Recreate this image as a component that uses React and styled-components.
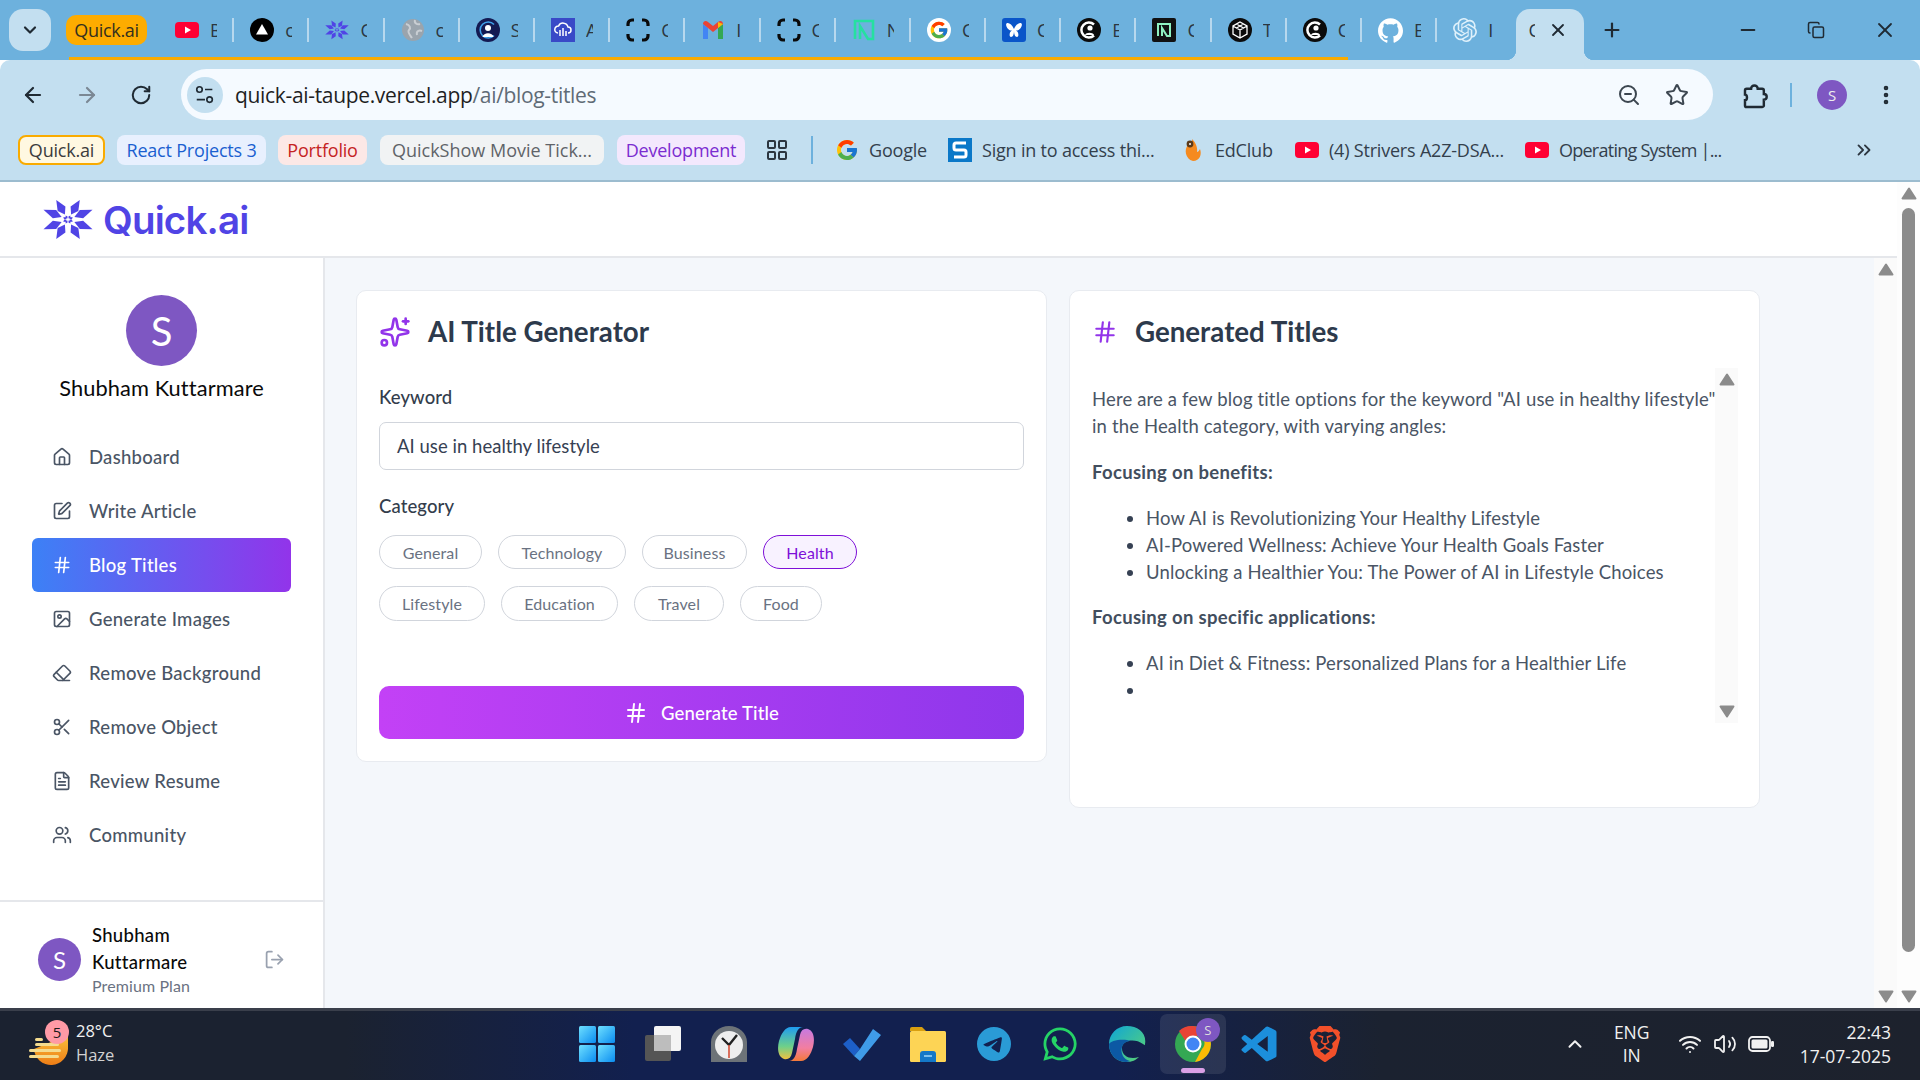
import React from "react";
import styled, { createGlobalStyle } from "styled-components";
import {
  House, SquarePen, Hash, Image, Eraser, Scissors, FileText, Users, LogOut, Sparkles,
  ArrowLeft, ArrowRight, RotateCw, ZoomOut, Star, EllipsisVertical, ChevronDown,
  X, Plus, Minus, LayoutGrid, ChevronsRight, ChevronUp, Wifi, Volume2, Copy,
} from "lucide-react";
import { FcGoogle } from "react-icons/fc";
import { SiGithub, SiOpenai, SiTelegram, SiBrave } from "react-icons/si";
import { FaWhatsapp } from "react-icons/fa";
import { BiLogoVisualStudio } from "react-icons/bi";

const UI = `"Lato", "Liberation Sans", sans-serif`;
const CHROME = `"Open Sans", "Noto Sans", sans-serif`;

const Global = createGlobalStyle`
  html, body { margin: 0; padding: 0; height: 100%; overflow: hidden; background: #fff; }
  #root { height: 100%; }
  * { box-sizing: border-box; }
`;

const Screen = styled.div`
  width: 1920px; height: 1080px; display: flex; flex-direction: column; overflow: hidden;
  font-family: ${UI};
`;

/* ---------- tab strip ---------- */
const TabStrip = styled.div`
  height: 60px; flex: none; background: #6db1dd; display: flex; align-items: flex-start;
  padding: 9px 0 0 9px; font-family: ${CHROME}; color: #1f2a33;
`;
const TabSearch = styled.div`
  width: 42px; height: 42px; flex: none; border-radius: 14px; background: #c3dff0;
  display: flex; align-items: center; justify-content: center; margin-right: 15px;
`;
const Group = styled.div`
  position: relative; display: flex; align-items: flex-start; height: 51px; flex: none;
  &::after {
    content: ""; position: absolute; left: 3px; right: 14px; bottom: 0; height: 3px; background: #f9ab00;
  }
`;
const GroupChip = styled.div`
  width: 81px; height: 30px; margin: 6px 12px 0 0; flex: none; border-radius: 10px; background: #fdac00;
  font-size: 18px; letter-spacing: -0.3px; display: flex; align-items: center; justify-content: center; color: #33301f;
`;
const Tab = styled.div`
  width: 75.2px; height: 42px; flex: none; display: flex; align-items: center; gap: 11px; padding-left: 16px; overflow: hidden;
  position: relative;
  &::after { content: ""; position: absolute; right: 0; top: 9px; height: 24px; width: 2px; background: ${(p) => (p.$last ? "transparent" : "#b7d8ee")}; }
`;
const TabLetter = styled.span`
  font-size: 18px; color: #2b3640; width: 7px; overflow: hidden; line-height: 1; flex: none; white-space: nowrap;
`;
const ActiveTab = styled.div`
  width: 68px; height: 51px; flex: none; margin-left: 4px; background: #c3dff0; border-radius: 14px 14px 0 0;
  display: flex; align-items: center; align-self: flex-start; padding: 0 0 9px 12px; gap: 13px; position: relative; z-index: 1;
  &::before, &::after {
    content: ""; position: absolute; bottom: 0; width: 10px; height: 10px;
  }
  &::before { left: -10px; background: radial-gradient(circle at 0 0, transparent 10px, #c3dff0 10.5px); }
  &::after { right: -10px; background: radial-gradient(circle at 100% 0, transparent 10px, #c3dff0 10.5px); }
`;
const NewTab = styled.div`
  width: 28px; height: 42px; margin-left: 14px; flex: none; display: flex; align-items: center; justify-content: center;
`;
const WindowControls = styled.div`
  margin-left: auto; display: flex; height: 42px; align-items: center; padding-right: 23px; gap: 48px;
`;

/* ---------- toolbar ---------- */
const ChromePanel = styled.div`
  flex: none; height: 122px; background: #c3dff0; font-family: ${CHROME}; border-bottom: 2px solid #9cbccf;
  border-radius: 10px 10px 0 0;
`;
const Toolbar = styled.div`
  height: 60px; display: flex; align-items: flex-end; padding: 0 20px 0 21px;
`;
const NavBtn = styled.div`
  width: 24px; height: 51px; display: flex; align-items: center; justify-content: center; margin-right: ${(p) => p.$mr || 30}px; flex: none;
`;
const Omnibox = styled.div`
  flex: none; width: 1532px; height: 51px; background: #f5faff; border-radius: 26px; display: flex; align-items: center;
  padding: 0 24px 0 6px; margin-left: 2px;
`;
const SiteInfo = styled.div`
  width: 36px; height: 36px; border-radius: 50%; background: #c3dff0; display: flex; align-items: center; justify-content: center; flex: none; margin-right: 12px;
`;
const Url = styled.div`
  font-size: 21px; color: #1f1f1f; letter-spacing: -0.33px; white-space: nowrap; flex: 1;
  span { color: #5f6b76; }
`;
const OmniIcons = styled.div`display: flex; gap: 24px; align-items: center;`;
const ToolRight = styled.div`
  display: flex; align-items: center; height: 51px; margin-left: 27px; flex: 1;
`;
const Separator = styled.div`
  width: 2px; height: ${(p) => p.$h || 24}px; background: #6db1dd; margin: ${(p) => p.$m || "0 15px"}; flex: none;
`;
const ProfileDot = styled.div`
  width: 30px; height: 30px; border-radius: 50%; background: #7e57c2; color: #eee; font-size: 15px; display: flex; align-items: center; justify-content: center; flex: none;
`;
const MenuDots = styled.span`display: inline-flex; margin-left: 27px; flex: none;`;

const BookmarkBar = styled.div`
  height: 60px; display: flex; align-items: center; padding: 0 0 0 18px;
  font-size: 18px; letter-spacing: -0.2px; white-space: nowrap;
`;
const BmChip = styled.div`
  height: 30px; width: ${(p) => p.$w}px; margin-right: ${(p) => p.$mr || 13}px; border-radius: 8px; flex: none; display: flex; align-items: center; justify-content: center;
  background: ${(p) => p.$bg}; color: ${(p) => p.$fg}; border: ${(p) => (p.$bd ? `2px solid ${p.$bd}` : "none")};
  letter-spacing: ${(p) => p.$ls ?? -0.2}px;
`;
const AppsGrid = styled.span`display: inline-flex; margin: 0 22px 0 7px; flex: none;`;
const Bookmark = styled.div`
  display: flex; align-items: center; gap: 10px; color: #33404c; flex: none; width: ${(p) => p.$w}px;
  letter-spacing: ${(p) => p.$ls ?? -0.2}px;
`;
const BmIcon = styled.span`display: inline-flex; flex: none;`;
const RoundFavicon = styled.span`
  width: 24px; height: 24px; border-radius: 50%; background: #fff; display: inline-flex; align-items: center; justify-content: center; flex: none;
`;

/* ---------- app ---------- */
const AppShell = styled.div`flex: 1; min-height: 0; display: flex;`;
const AppColumn = styled.div`flex: 1; min-width: 0; display: flex; flex-direction: column;`;
const Navbar = styled.div`
  height: 76px; flex: none; border-bottom: 2px solid #e5e7eb; background: #fff; display: flex; align-items: center; padding: 0 0 0 43px; gap: 10px;
`;
const LogoText = styled.div`
  font-family: "Inter", sans-serif; font-weight: 600; font-size: 38.5px; letter-spacing: -0.85px; color: #5044e5; padding-top: 2px;
`;
const Body = styled.div`flex: 1; min-height: 0; display: flex;`;
const Sidebar = styled.aside`
  width: 325px; flex: none; border-right: 2px solid #e5e7eb; background: #fff; display: flex; flex-direction: column;
`;
const SideTop = styled.div`flex: 1; padding: 37px 32px 0 32px; display: flex; flex-direction: column; align-items: center;`;
const BigAvatar = styled.div`
  width: ${(p) => p.$d}px; height: ${(p) => p.$d}px; border-radius: 50%; background: #7e57c2; color: #fff; flex: none;
  font-size: ${(p) => p.$f}px; display: flex; align-items: center; justify-content: center; font-family: "Lato", sans-serif;
`;
const SideName = styled.div`
  font-size: 21.8px; color: #0a0a0a; margin-top: 8px; line-height: 28px; letter-spacing: 0.1px; white-space: nowrap;
`;
const Menu = styled.nav`width: 100%; margin-top: 28px; display: flex; flex-direction: column;`;
const MenuItem = styled.div`
  height: 54px; border-radius: 6px; display: flex; align-items: center; padding-left: 20px; gap: 17px; font-size: 18.5px; font-weight: 500; letter-spacing: 0.28px;
  color: ${(p) => (p.$active ? "#fff" : "#4a5565")};
  background: ${(p) => (p.$active ? "linear-gradient(to right, #3c81f6, #9234ea)" : "transparent")};
`;
const SideFoot = styled.div`
  height: 108px; flex: none; border-top: 2px solid #e5e7eb; display: flex; align-items: center; padding: 8px 0 0 38px;
`;
const FootText = styled.div`margin-left: 11px; width: 124px; flex: none;`;
const FootName = styled.div`font-size: 18.5px; font-weight: 500; line-height: 27px; color: #0a0a0a; letter-spacing: 0.3px;`;
const FootPlan = styled.div`font-size: 16px; line-height: 20px; color: #6a7282; letter-spacing: 0.1px;`;
const FootAction = styled.div`margin-left: 48px; display: flex; color: #99a1af;`;

const Main = styled.main`
  flex: 1; min-width: 0; background: #f4f7fb; padding: 32px 0 0 31px; display: flex; align-items: flex-start; gap: 22px;
`;
const Card = styled.section`
  width: ${(p) => p.$w}px; height: ${(p) => p.$h}px; flex: none; background: #fff; border: 1.5px solid #e8ebf0; border-radius: 10px; padding: 22px;
  display: flex; flex-direction: column;
`;
const CardHead = styled.div`
  display: flex; align-items: center; gap: ${(p) => p.$gap}px; height: 38px;
`;
const CardTitle = styled.h2`
  margin: 0; font-size: 27.7px; font-weight: 700; color: #2d3a4c; line-height: 38px;
`;
const FieldLabel = styled.div`
  font-size: 18.5px; font-weight: 500; color: #333d4c; line-height: 24px; margin-top: ${(p) => p.$mt}px; letter-spacing: 0.1px;
`;
const Input = styled.div`
  height: 49px; margin-top: 13px; border: 1.5px solid #d1d5dc; border-radius: 7px; display: flex; align-items: center; padding-left: 17px; font-size: 18.5px; color: #364153; letter-spacing: 0.03px;
`;
const ChipWrap = styled.div`display: flex; flex-wrap: wrap; gap: 17px 16px; margin-top: 17px; height: 86px; max-width: 500px; align-content: flex-start;`;
const Chip = styled.div`
  height: ${(p) => p.$h}px; width: ${(p) => p.$w}px; border-radius: 18px; font-size: 16px; display: flex; align-items: center; justify-content: center; letter-spacing: 0.1px;
  border: 1.5px solid ${(p) => (p.$on ? "#7e10d8" : "#d1d5dc")};
  color: ${(p) => (p.$on ? "#7e10d8" : "#6a7282")};
  background: ${(p) => (p.$on ? "#f8f2ff" : "#fff")};
`;
const GenButton = styled.div`
  height: 54px; margin-top: 65px; border-radius: 10px; background: linear-gradient(to right, #c341f6, #8e37eb); color: #fff; font-size: 18.5px; font-weight: 500; letter-spacing: 0.15px;
  display: flex; align-items: center; justify-content: center; gap: 13px;
`;
const ResultRow = styled.div`display: flex; margin-top: 17px; height: 355px; margin-right: -1px;`;
const ResultBody = styled.div`
  flex: 1; min-width: 0; padding-top: 18px; font-size: 18.5px; line-height: 27px; color: #4a5565; letter-spacing: 0.14px;
  p { margin: 0 0 19px; white-space: nowrap; }
  strong { font-weight: 700; color: #424e5e; letter-spacing: 0.32px; }
  ul { margin: 0 0 18px; padding-left: 54px; }
  li { height: 27px; white-space: nowrap; }
  li::marker { color: #364153; }
`;
const Track = styled.div`
  width: 23px; flex: none; background: ${(p) => p.$bg || "#fafafa"}; display: flex; flex-direction: column; align-items: center; justify-content: space-between; padding: 5px 0;
`;
const Thumb = styled.div`width: 13px; flex: 1; border-radius: 7px; background: #8b8b8b; margin: 8px 0 38px;`;

/* ---------- taskbar ---------- */
const Taskbar = styled.footer`
  height: 72px; flex: none; border-top: 3px solid #3a3f4b; display: flex; align-items: center;
  background: linear-gradient(to right, #1b2230 0%, #1b2230 18%, #12204f 33%, #12204f 58%, #1b2230 72%, #1d222d 100%);
  color: #f1f1f1; font-family: "Open Sans", sans-serif;
`;
const Weather = styled.div`
  width: 488px; flex: none; display: flex; align-items: center; padding: 0 0 5px 28px; gap: 8px; height: 100%;
`;
const WeatherGlyph = styled.div`width: 40px; height: 48px; position: relative; flex: none;`;
const Badge = styled.div`
  position: absolute; top: 1px; left: 17px; width: 24px; height: 24px; border-radius: 50%; background: #ff9aa6; color: #1a1a1a; font-size: 15px; display: flex; align-items: center; justify-content: center;
`;
const WeatherText = styled.div`font-size: 16.5px; line-height: 24px; span { display: block; } span + span { color: #d2d2d2; }`;
const AppIcons = styled.div`display: flex; align-items: center; height: 100%; flex: none; margin-left: 76px; padding-bottom: 3px;`;
const AppSlot = styled.div`
  width: 66.2px; height: 60px; display: flex; align-items: center; justify-content: center; position: relative; border-radius: 7px;
  background: ${(p) => (p.$on ? "rgba(255,255,255,0.09)" : "transparent")};
`;
const Indicator = styled.div`
  position: absolute; bottom: 1px; left: 50%; transform: translateX(-50%); width: 24px; height: 5px; border-radius: 3px; background: #d9a0e6;
`;
const AppBadge = styled.div`
  position: absolute; top: 4px; right: 6px; width: 24px; height: 24px; border-radius: 50%; background: #7e57c2; color: #ddd; font-size: 13px; display: flex; align-items: center; justify-content: center;
`;
const Tray = styled.div`
  margin-left: auto; display: flex; align-items: center; padding: 0 29px 3px 0; font-size: 17.5px;
`;
const Lang = styled.div`text-align: center; line-height: 23px; width: 50px; margin: 0 21px 0 21px;`;
const TrayIcons = styled.div`display: flex; align-items: center; gap: 11px;`;
const Clock = styled.div`text-align: right; line-height: 24px; margin-left: 26px; white-space: nowrap;`;

/* ---------- drawings ---------- */
const arm = (tx, ty) => {
  const len = Math.hypot(tx, ty);
  const nx = -ty / len;
  const ny = tx / len;
  const w = 4.6;
  const mx = tx * 0.55, my = ty * 0.55;
  const ix = tx * 0.26, iy = ty * 0.26;
  return `M${tx} ${ty} L${mx + nx * w} ${my + ny * w} L${ix} ${iy} L${mx - nx * w} ${my - ny * w} Z`;
};
const peaks = [[12, -20], [25, -10], [25, 10], [12, 20], [-12, 20], [-25, 10], [-25, -10], [-12, -20]];
const Burst = ({ size = 50, color = "#5044e5" }) => (
  <svg width={size} height={size * 0.82} viewBox="-25.500 -20.500 51 41">
    <g fill={color}>
      {peaks.map(([x, y], i) => <path key={i} d={arm(x, y)} />)}
      {peaks.map(([x, y], i) => (
        <path key={`i${i}`} d={`M${x * 0.2} ${y * 0.2} L${x * 0.12 - y * 0.05} ${y * 0.12 + x * 0.05} L${x * 0.05} ${y * 0.05} L${x * 0.12 + y * 0.05} ${y * 0.12 - x * 0.05} Z`} />
      ))}
    </g>
  </svg>
);
const Svg = ({ s = 24, vb = "0 0 24 24", children }) => (
  <svg width={s} height={s} viewBox={vb} style={{ flex: "none" }}>{children}</svg>
);
const Yt = ({ s = 24 }) => (
  <Svg s={s}><rect x="0" y="4" width="24" height="16" rx="4" fill="#ff0033" /><path d="M10 8.500 L16 12 L10 15.500 Z" fill="#fff" /></Svg>
);
const Frame = () => (
  <Svg><path d="M8 2H6a4 4 0 0 0-4 4v2M16 2h2a4 4 0 0 1 4 4v2M8 22H6a4 4 0 0 1-4-4v-2M16 22h2a4 4 0 0 0 4-4v-2" fill="none" stroke="#0a0a0a" strokeWidth="3.2" /></Svg>
);
const BlackC = () => (
  <Svg><circle cx="12" cy="12" r="12" fill="#0b0b0b" /><path d="M17 6.500A7.500 7.500 0 1 0 17 17.500" fill="none" stroke="#fff" strokeWidth="2.500" /><circle cx="13" cy="10" r="2.600" fill="#fff" /><path d="M8 17c1-3 8-3 9 0z" fill="#fff" /></Svg>
);
const favicons = [
  <Yt />,
  <Svg><circle cx="12" cy="12" r="12" fill="#000" /><path d="M12 6 L18 16.500 H6 Z" fill="#fff" /></Svg>,
  <Burst size={24} />,
  <Svg><circle cx="12" cy="12" r="11" fill="#9aa4ad" /><path d="M5 6c4 1 5 4 3 6s1 5 3 8M14 2c-1 3 2 5 5 4M21 13c-3-1-6 0-5 4" fill="none" stroke="#c9ced3" strokeWidth="2" /></Svg>,
  <Svg><circle cx="12" cy="12" r="12" fill="#141a52" /><path d="M18 6.500A8 8 0 1 0 18 17.500" fill="none" stroke="#3fa0ea" strokeWidth="1.600" /><circle cx="12" cy="10" r="3" fill="#fff" /><path d="M6.500 19c1-5 10-5 11 0z" fill="#fff" /></Svg>,
  <Svg><rect width="24" height="24" fill="#3949c7" /><path d="M7 15a3.500 3.500 0 0 1 .6-7A5 5 0 0 1 17 9a3 3 0 0 1 0 6" fill="none" stroke="#fff" strokeWidth="1.500" /><path d="M9 12v6M12 10v8M15 13v5" stroke="#fff" strokeWidth="1.500" /></Svg>,
  <Frame />,
  <Svg>
    <path d="M2 21V6l5 4v11z" fill="#4285f4" /><path d="M22 21V6l-5 4v11z" fill="#34a853" />
    <path d="M2 6c0-3 3-4 5-2l5 4 5-4c2-2 5-1 5 2l-10 8z" fill="#ea4335" />
    <path d="M17 4l5 2-5 4z" fill="#fbbc05" />
  </Svg>,
  <Frame />,
  <Svg><path d="M3 21V3h18v18h-5L8 8v13" fill="none" stroke="#25e0a0" strokeWidth="2.600" /></Svg>,
  <RoundFavicon><FcGoogle size={20} /></RoundFavicon>,
  <Svg><rect width="24" height="24" rx="3" fill="#0a55c9" /><path d="M12 11C10 6 6 4 4.500 5.500S6 13 10 12.500C7 14 7 19 9 19s3-3 3-6c0 3 1 6 3 6s2-5-1-6.500C18 13 21 7 19.500 5.500S14 6 12 11z" fill="#fff" /></Svg>,
  <BlackC />,
  <Svg><rect width="24" height="24" rx="2" fill="#111" /><path d="M6 18V6h12v12h-3L10 10v8" fill="none" stroke="#8ef0c0" strokeWidth="2" /></Svg>,
  <Svg><circle cx="12" cy="12" r="12" fill="#0b0b0b" /><path d="M12 4l7 4v8l-7 4-7-4V8zM5 8l7 4 7-4M12 12v8M8.500 6l7 4M15.500 6l-7 4" fill="none" stroke="#fff" strokeWidth="1.300" /></Svg>,
  <BlackC />,
  <SiGithub size={25} color="#fff" />,
  <SiOpenai size={24} color="#dff1fb" />,
];
const tabLetters = "BcCcSACICNCCECTCEI".split("");

const Tune = () => (
  <Svg s={22}><circle cx="6" cy="6" r="3" fill="none" stroke="#1f2a33" strokeWidth="1.800" /><path d="M12 6h8M3 17h9" stroke="#1f2a33" strokeWidth="1.800" /><circle cx="17" cy="17" r="3" fill="none" stroke="#1f2a33" strokeWidth="1.800" /></Svg>
);
const Extension = () => (
  <Svg s={28}><path d="M6 7h4a3 3 0 0 1 6 0h4a1.500 1.500 0 0 1 1.500 1.500v3.200a2.600 2.600 0 0 1 0 5.200v4.600A1.500 1.500 0 0 1 20 23.500H6a1.500 1.500 0 0 1-1.500-1.500v-4.700c2.400 0 2.400-5 0-5V8.500A1.500 1.500 0 0 1 6 7z" transform="scale(0.95)" fill="none" stroke="#1f2a33" strokeWidth="2.200" /></Svg>
);
const Battery = () => (
  <svg width="26" height="16" viewBox="0 0 26 16">
    <rect x="1" y="1" width="21" height="14" rx="3.500" fill="none" stroke="#f1f1f1" strokeWidth="1.800" />
    <rect x="3.500" y="3.500" width="16" height="9" rx="1.500" fill="#f1f1f1" />
    <rect x="23" y="5" width="3" height="6" rx="1.200" fill="#f1f1f1" />
  </svg>
);
const SBox = () => (
  <Svg><rect width="24" height="24" fill="#0a78c8" /><path d="M18 5H8a2 2 0 0 0-2 2v3a2 2 0 0 0 2 2h8a2 2 0 0 1 2 2v3a2 2 0 0 1-2 2H6" fill="none" stroke="#fff" strokeWidth="3" /></Svg>
);
const Flame = () => (
  <Svg><path d="M11 1c1 4-3 3-4 6C3 11 4 21 12 23c7 0 9-7 7-12-1 2-2 3-3 3 1-5-2-10-5-13z" fill="#f58a1f" /><circle cx="9" cy="6" r="3.400" fill="#5b3a1a" /><circle cx="9" cy="6" r="1" fill="#fff" /></Svg>
);
const Triangle = ({ down, s = 18 }) => (
  <svg width={s} height={s * 0.72} viewBox="0 0 18 13" style={{ flex: "none" }}>
    <path d={down ? "M2.500 1.500 H15.500 L9 11.500 Z" : "M2.500 11.500 H15.500 L9 1.500 Z"} fill="#8b8b8b" stroke="#8b8b8b" strokeWidth="2" strokeLinejoin="round" />
  </svg>
);
const HazeGlyph = () => (
  <svg width="40" height="48" viewBox="0 0 40 48">
    <defs><linearGradient id="sun" x1="0" y1="0" x2="0" y2="1"><stop offset="0" stopColor="#f9c23c" /><stop offset="1" stopColor="#ee7d16" /></linearGradient></defs>
    <path d="M6 30 a17 17 0 0 0 34 -2 l0 -12 Z" fill="url(#sun)" />
    <g fill="#f4dc8f">
      <rect x="7" y="19" width="8" height="3" rx="1.500" /><rect x="7" y="24" width="24" height="3" rx="1.500" />
      <rect x="1" y="30" width="32" height="3" rx="1.500" /><rect x="1" y="36" width="30" height="3" rx="1.500" />
    </g>
  </svg>
);
const Win = () => (
  <svg width="36" height="36" viewBox="0 0 36 36">
    <defs><linearGradient id="wg" x1="0" y1="0" x2="1" y2="1"><stop offset="0" stopColor="#6fe0ff" /><stop offset="1" stopColor="#0a8cf0" /></linearGradient></defs>
    <rect x="0" y="0" width="17" height="17" rx="1.500" fill="url(#wg)" /><rect x="19" y="0" width="17" height="17" rx="1.500" fill="url(#wg)" />
    <rect x="0" y="19" width="17" height="17" rx="1.500" fill="url(#wg)" /><rect x="19" y="19" width="17" height="17" rx="1.500" fill="url(#wg)" />
  </svg>
);
const TaskView = () => (
  <svg width="36" height="36" viewBox="0 0 36 36">
    <rect x="0" y="9" width="26" height="26" rx="2" fill="#555" /><rect x="9" y="0" width="27" height="25" rx="2" fill="#f4f4f4" /><rect x="9" y="9" width="17" height="16" fill="#bdbdbd" />
  </svg>
);
const ClockApp = () => (
  <svg width="36" height="36" viewBox="0 0 36 36">
    <path d="M0 36V16a18 16 0 0 1 36 0v20z" fill="#6d7378" /><ellipse cx="18" cy="19" rx="14" ry="14" fill="#eee" />
    <path d="M18 19L11 12M18 19L26 9" stroke="#222" strokeWidth="2.400" /><path d="M18 19v13" stroke="#d23a1f" strokeWidth="1.400" />
  </svg>
);
const Copilot = () => (
  <svg width="36" height="36" viewBox="0 0 36 36">
    <defs>
      <linearGradient id="c1" x1="0" y1="0" x2="0" y2="1"><stop offset="0" stopColor="#1f9cf0" /><stop offset=".6" stopColor="#6dd08a" /><stop offset="1" stopColor="#f0c040" /></linearGradient>
      <linearGradient id="c2" x1="0" y1="0" x2="0" y2="1"><stop offset="0" stopColor="#c77ae0" /><stop offset=".6" stopColor="#f27ea0" /><stop offset="1" stopColor="#f47a3a" /></linearGradient>
    </defs>
    <path d="M13 1h12c-4 0-7 4-8 12l-3 14c-1 5-4 7-8 6-6-2-7-10-5-18C3 8 7 1 13 1z" fill="url(#c1)" />
    <path d="M23 35H11c4 0 7-4 8-12l3-14c1-5 4-7 8-6 6 2 7 10 5 18-2 7-6 14-12 14z" fill="url(#c2)" />
  </svg>
);
const Todo = () => (
  <svg width="38" height="36" viewBox="0 0 38 36">
    <path d="M0 18l7-6 10 11-6 7z" fill="#1d5fc8" /><path d="M11 30l6-7L30 3l8 6-21 26z" fill="#3f9be8" />
  </svg>
);
const Folder = () => (
  <svg width="36" height="36" viewBox="0 0 36 36">
    <path d="M0 3a2 2 0 0 1 2-2h10l4 4H0z" fill="#d99f10" /><rect x="0" y="5" width="36" height="31" rx="1.500" fill="#fdd455" />
    <path d="M10 36v-8a3 3 0 0 1 3-3h10a3 3 0 0 1 3 3v8z" fill="#1478c8" /><rect x="14" y="29" width="8" height="2" fill="#7cc0ee" />
  </svg>
);
const Edge = () => (
  <svg width="38" height="38" viewBox="0 0 38 38">
    <defs>
      <linearGradient id="e1" x1="0" y1="0" x2="1" y2="1"><stop offset="0" stopColor="#0ea5d8" /><stop offset="1" stopColor="#5ed66f" /></linearGradient>
    </defs>
    <path d="M19 1C9 1 1 9 1 19c0 11 8 18 17 18 6 0 10-2 13-5-8 3-18 0-17-10 1-7 13-9 21-3 2 1 2 2 2 0 2-11-7-18-18-18z" fill="url(#e1)" />
    <path d="M1 19c0 11 8 18 17 18 3 0 4-1 4-1-6-1-10-8-8-14 1-4 5-6 9-6-9-3-21 0-22 3z" fill="#0c59a4" />
  </svg>
);
const ChromeLogo = () => (
  <svg width="38" height="38" viewBox="0 0 38 38">
    <circle cx="19" cy="19" r="18" fill="#34a853" />
    <path d="M19 1a18 18 0 0 1 16 10H19a8 8 0 0 0-7.500 5L5 6a18 18 0 0 1 14-5z" fill="#ea4335" />
    <path d="M35 11a18 18 0 0 1-14 26l7-13a8 8 0 0 0-2-13z" fill="#fbbc05" />
    <circle cx="19" cy="19" r="8.500" fill="#fff" /><circle cx="19" cy="19" r="6.500" fill="#4285f4" />
  </svg>
);

const menu = [
  [House, "Dashboard"], [SquarePen, "Write Article"], [Hash, "Blog Titles"], [Image, "Generate Images"],
  [Eraser, "Remove Background"], [Scissors, "Remove Object"], [FileText, "Review Resume"], [Users, "Community"],
];
const chips = [
  ["General", 103, 34], ["Technology", 128, 34], ["Business", 105, 34], ["Health", 94, 34],
  ["Lifestyle", 106, 35], ["Education", 117, 35], ["Travel", 90, 35], ["Food", 82, 35],
];
const GROUPED = 16;

export default function App() {
  return (
    <Screen>
      <Global />
      <TabStrip>
        <TabSearch><ChevronDown size={20} color="#1f2a33" strokeWidth={2.6} /></TabSearch>
        <Group>
          <GroupChip>Quick.ai</GroupChip>
          {favicons.slice(0, GROUPED).map((f, i) => (
            <Tab key={i}>{f}<TabLetter>{tabLetters[i]}</TabLetter></Tab>
          ))}
        </Group>
        {favicons.slice(GROUPED).map((f, i) => (
          <Tab key={i} $last={i === 1}>{f}<TabLetter>{tabLetters[GROUPED + i]}</TabLetter></Tab>
        ))}
        <ActiveTab>
          <TabLetter>C</TabLetter>
          <X size={20} color="#1f2a33" strokeWidth={2.2} />
        </ActiveTab>
        <NewTab><Plus size={22} color="#1f2a33" strokeWidth={2.4} /></NewTab>
        <WindowControls>
          <Minus size={22} color="#1f2a33" strokeWidth={2} />
          <Copy size={18} color="#1f2a33" strokeWidth={2} />
          <X size={24} color="#1f2a33" strokeWidth={1.8} />
        </WindowControls>
      </TabStrip>

      <ChromePanel>
        <Toolbar>
          <NavBtn><ArrowLeft size={24} color="#1f2a33" strokeWidth={2.2} /></NavBtn>
          <NavBtn><ArrowRight size={24} color="#7b8894" strokeWidth={2.2} /></NavBtn>
          <NavBtn $mr={26}><RotateCw size={22} color="#1f2a33" strokeWidth={2.2} /></NavBtn>
          <Omnibox>
            <SiteInfo><Tune /></SiteInfo>
            <Url>quick-ai-taupe.vercel.app<span>/ai/blog-titles</span></Url>
            <OmniIcons>
              <ZoomOut size={24} color="#3c4650" strokeWidth={2} />
              <Star size={24} color="#3c4650" strokeWidth={2} />
            </OmniIcons>
          </Omnibox>
          <ToolRight>
            <Extension />
            <Separator $m="0 25px 0 22px" />
            <ProfileDot>S</ProfileDot>
            <MenuDots><EllipsisVertical size={24} color="#1f2a33" strokeWidth={2.6} /></MenuDots>
          </ToolRight>
        </Toolbar>
        <BookmarkBar>
          <BmChip $w={87} $mr={12} $bg="#fff8e1" $fg="#3c3c3c" $bd="#f9ab00">Quick.ai</BmChip>
          <BmChip $w={149} $mr={12} $bg="#e8f0fe" $fg="#1a5fd0">React Projects 3</BmChip>
          <BmChip $w={89} $bg="#fce8e6" $fg="#c5221f">Portfolio</BmChip>
          <BmChip $w={224} $ls={0} $bg="#f1f3f4" $fg="#5f6368">QuickShow Movie Tick...</BmChip>
          <BmChip $w={128} $bg="#f3e8fd" $fg="#7b2cd0">Development</BmChip>
          <AppsGrid><LayoutGrid size={24} color="#2c3640" strokeWidth={2} /></AppsGrid>
          <Separator $m="0 22px 0 0" $h={28} />
          <Bookmark $w={113}><BmIcon><FcGoogle size={24} /></BmIcon>Google</Bookmark>
          <Bookmark $w={233}><BmIcon><SBox /></BmIcon>Sign in to access thi...</Bookmark>
          <Bookmark $w={114}><BmIcon><Flame /></BmIcon>EdClub</Bookmark>
          <Bookmark $w={230}><BmIcon><Yt /></BmIcon>(4) Strivers A2Z-DSA...</Bookmark>
          <Bookmark $w={328} $ls={-0.75}><BmIcon><Yt /></BmIcon>Operating System |...</Bookmark>
          <ChevronsRight size={22} color="#2c3640" strokeWidth={2} />
        </BookmarkBar>
      </ChromePanel>

      <AppShell>
        <AppColumn>
          <Navbar>
            <Burst size={50} />
            <LogoText>Quick.ai</LogoText>
          </Navbar>
          <Body>
            <Sidebar>
              <SideTop>
                <BigAvatar $d={71} $f={40}>S</BigAvatar>
                <SideName>Shubham Kuttarmare</SideName>
                <Menu>
                  {menu.map(([Icon, label]) => (
                    <MenuItem key={label} $active={label === "Blog Titles"}>
                      <Icon size={20} strokeWidth={2} />
                      {label}
                    </MenuItem>
                  ))}
                </Menu>
              </SideTop>
              <SideFoot>
                <BigAvatar $d={43} $f={24}>S</BigAvatar>
                <FootText>
                  <FootName>Shubham Kuttarmare</FootName>
                  <FootPlan>Premium Plan</FootPlan>
                </FootText>
                <FootAction><LogOut size={21} strokeWidth={2} /></FootAction>
              </SideFoot>
            </Sidebar>
            <Main>
              <Card $w={691} $h={472}>
                <CardHead $gap={17}>
                  <Sparkles size={32} color="#9234ea" strokeWidth={2} />
                  <CardTitle>AI Title Generator</CardTitle>
                </CardHead>
                <FieldLabel $mt={34}>Keyword</FieldLabel>
                <Input>AI use in healthy lifestyle</Input>
                <FieldLabel $mt={24}>Category</FieldLabel>
                <ChipWrap>
                  {chips.map(([c, w, h]) => (
                    <Chip key={c} $w={w} $h={h} $on={c === "Health"}>{c}</Chip>
                  ))}
                </ChipWrap>
                <GenButton><Hash size={24} strokeWidth={2} />Generate Title</GenButton>
              </Card>
              <Card $w={691} $h={518}>
                <CardHead $gap={17}>
                  <Hash size={26} color="#9234ea" strokeWidth={2} />
                  <CardTitle>Generated Titles</CardTitle>
                </CardHead>
                <ResultRow>
                  <ResultBody>
                    <p>
                      Here are a few blog title options for the keyword "AI use in healthy lifestyle"<br />
                      in the Health category, with varying angles:
                    </p>
                    <p><strong>Focusing on benefits:</strong></p>
                    <ul>
                      <li>How AI is Revolutionizing Your Healthy Lifestyle</li>
                      <li>AI-Powered Wellness: Achieve Your Health Goals Faster</li>
                      <li>Unlocking a Healthier You: The Power of AI in Lifestyle Choices</li>
                    </ul>
                    <p><strong>Focusing on specific applications:</strong></p>
                    <ul>
                      <li>AI in Diet &amp; Fitness: Personalized Plans for a Healthier Life</li>
                      <li></li>
                    </ul>
                  </ResultBody>
                  <Track><Triangle /><Triangle down /></Track>
                </ResultRow>
              </Card>
            </Main>
            <Track><Triangle /><Triangle down /></Track>
          </Body>
        </AppColumn>
        <Track $bg="#fdfdfd">
          <Triangle />
          <Thumb />
          <Triangle down />
        </Track>
      </AppShell>

      <Taskbar>
        <Weather>
          <WeatherGlyph><HazeGlyph /><Badge>5</Badge></WeatherGlyph>
          <WeatherText><span>28°C</span><span>Haze</span></WeatherText>
        </Weather>
        <AppIcons>
          <AppSlot><Win /></AppSlot>
          <AppSlot><TaskView /></AppSlot>
          <AppSlot><ClockApp /></AppSlot>
          <AppSlot><Copilot /></AppSlot>
          <AppSlot><Todo /></AppSlot>
          <AppSlot><Folder /></AppSlot>
          <AppSlot><SiTelegram size={34} color="#2a9bd6" /></AppSlot>
          <AppSlot><FaWhatsapp size={38} color="#25d366" /></AppSlot>
          <AppSlot><Edge /></AppSlot>
          <AppSlot $on><ChromeLogo /><AppBadge>S</AppBadge><Indicator /></AppSlot>
          <AppSlot><BiLogoVisualStudio size={42} color="#1c8fdc" /></AppSlot>
          <AppSlot><SiBrave size={36} color="#f2502a" /></AppSlot>
        </AppIcons>
        <Tray>
          <ChevronUp size={22} color="#f1f1f1" strokeWidth={2.2} />
          <Lang>ENG<br />IN</Lang>
          <TrayIcons>
            <Wifi size={24} color="#f1f1f1" strokeWidth={2} />
            <Volume2 size={24} color="#f1f1f1" strokeWidth={1.8} />
            <Battery />
          </TrayIcons>
          <Clock>22:43<br />17-07-2025</Clock>
        </Tray>
      </Taskbar>
    </Screen>
  );
}
